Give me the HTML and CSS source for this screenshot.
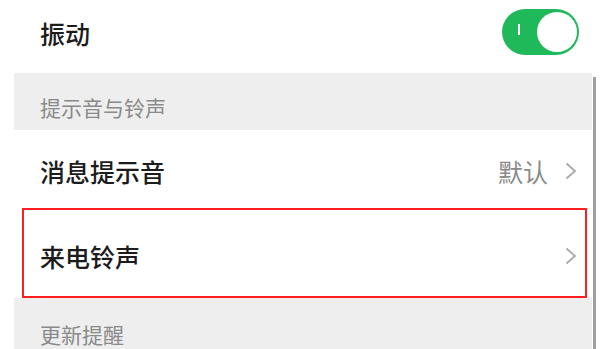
FILE: index.html
```html
<!DOCTYPE html>
<html lang="zh-CN">
<head>
<meta charset="utf-8">
<link rel="stylesheet" href="styles.css">
</head>
<body>
<div class="screen">
  <div class="row-top">
    <span class="label">振动</span>
    <div class="toggle">
      <span class="toggle-mark"></span>
      <span class="toggle-knob"></span>
    </div>
  </div>
  <div class="list">
    <div class="section-head head-1">提示音与铃声</div>
    <div class="item item-msg">
      <span class="label">消息提示音</span>
      <span class="value">默认</span>
      <svg class="chev" viewBox="0 0 12 18" width="12" height="18"><path d="M1.5 1.5 L10 9 L1.5 16.5" fill="none" stroke="#a8a8a8" stroke-width="1.8"/></svg>
    </div>
    <div class="item item-ring">
      <span class="label">来电铃声</span>
      <svg class="chev" viewBox="0 0 12 18" width="12" height="18"><path d="M1.5 1.5 L10 9 L1.5 16.5" fill="none" stroke="#a8a8a8" stroke-width="1.8"/></svg>
    </div>
    <div class="section-head head-2">更新提醒</div>
  </div>
  <div class="scrollbar"></div>
</div>
</body>
</html>
```
FILE: styles.css
```css
html, body {
  margin: 0;
  padding: 0;
  background: #ffffff;
}
.screen {
  position: relative;
  width: 600px;
  height: 349px;
  overflow: hidden;
  font-family: "Noto Sans CJK SC", "Noto Sans", sans-serif;
}
.label {
  font-size: 25px;
  font-weight: 500;
  color: #1c1c1c;
  line-height: 30px;
}
.row-top {
  height: 73px;
  display: flex;
  align-items: center;
  justify-content: space-between;
  padding: 0 21px 0 40px;
  box-sizing: border-box;
}
.row-top .label {
  margin-top: -8px;
}
.toggle {
  width: 77px;
  height: 46px;
  border-radius: 23px;
  background: #1fb95a;
  display: flex;
  align-items: center;
  justify-content: space-between;
  padding: 0 2px 0 16px;
  box-sizing: border-box;
  margin-top: -10px;
}
.toggle-mark {
  width: 2px;
  height: 11px;
  background: #ffffff;
  margin-top: -4px;
}
.toggle-knob {
  width: 40px;
  height: 40px;
  border-radius: 50%;
  background: #ffffff;
}
.list {
  margin-left: 14px;
  width: 578px;
}
.section-head {
  background: #eeeeee;
  color: #8a8a8a;
  font-size: 21px;
  line-height: 24px;
  padding-left: 26px;
}
.head-1 {
  height: 57px;
  box-sizing: border-box;
  padding-top: 22px;
}
.head-2 {
  height: 51px;
  box-sizing: border-box;
  padding-top: 24px;
}
.item {
  display: flex;
  align-items: center;
  box-sizing: border-box;
  background: #ffffff;
}
.item-msg {
  height: 78px;
  padding: 4px 15px 0 26px;
}
.item-msg .value {
  margin-left: auto;
  font-size: 25px;
  color: #8a8a8a;
  line-height: 30px;
  margin-right: 17px;
}
.item-ring {
  height: 90px;
  margin: 0 5px 0 8px;
  border: 2px solid #ff1e1e;
  padding: 5px 8px 0 16px;
  justify-content: space-between;
}
.scrollbar {
  position: absolute;
  top: 77px;
  left: 593px;
  width: 3px;
  bottom: 0;
  background: #a0a0a0;
}
```
